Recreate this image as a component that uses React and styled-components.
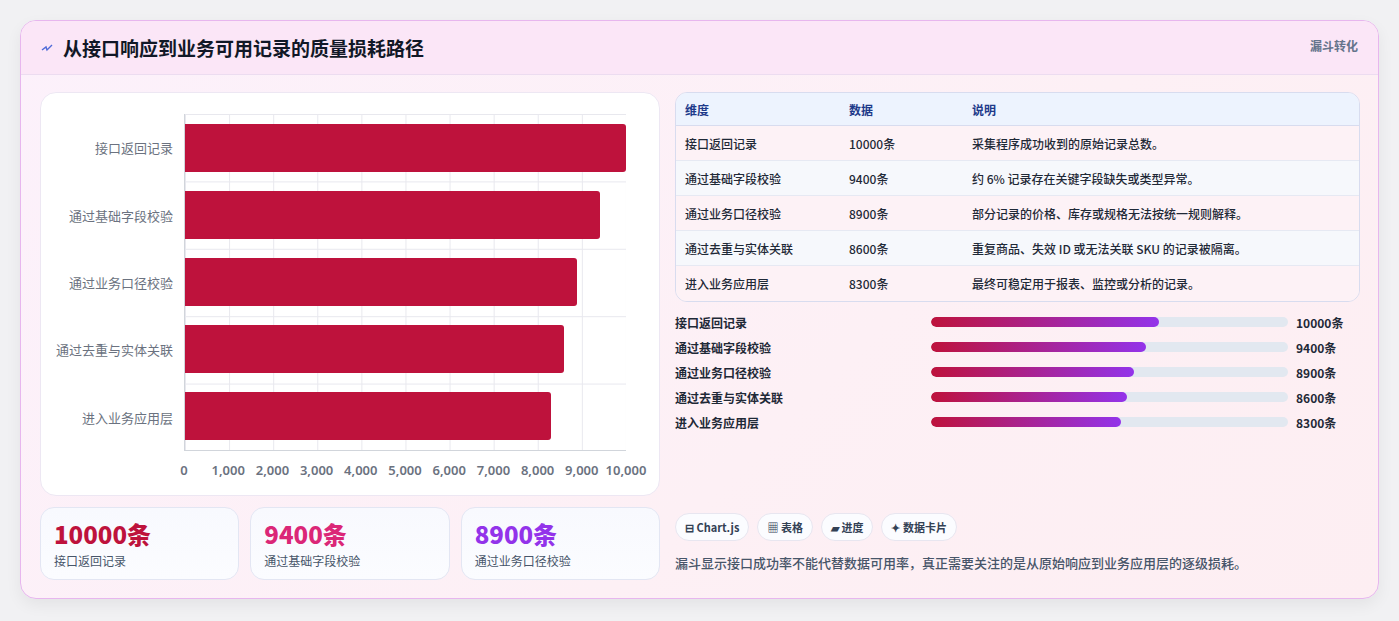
import React from "react";
import styled, { createGlobalStyle } from "styled-components";

const Global = createGlobalStyle`
  body { margin: 0; background: #f1f1f3; font-family: "Noto Sans CJK SC", "Noto Sans", sans-serif; }
  * { box-sizing: border-box; }
`;

const Page = styled.div`
  padding: 20px 20px 22px 20px;
  width: 1399px;
`;
const Card = styled.div`
  width: 1359px;
  height: 579px;
  border: 1px solid #e7b6ee;
  border-radius: 16px;
  background: linear-gradient(135deg, #fcf1fb 0%, #fdf0f5 60%, #fdeef2 100%);
  box-shadow: 0 6px 16px rgba(0,0,0,0.06);
  overflow: hidden;
  display: flex;
  flex-direction: column;
`;
const Header = styled.div`
  height: 55px;
  background: #fbe6f7;
  border-bottom: 1px solid #ecdcf0;
  display: flex;
  align-items: center;
  justify-content: space-between;
  padding: 0 20px 0 20px;
`;
const Title = styled.h1`
  margin: 0;
  font-size: 19px;
  font-weight: 700;
  color: #111827;
  display: flex;
  align-items: center;
  gap: 10px;
`;
const Badge = styled.span`
  font-size: 12px;
  font-weight: 700;
  color: #64748b;
  align-self: flex-start;
  margin-top: 16px;
`;
const Body = styled.div`
  flex: 1;
  display: grid;
  grid-template-columns: 620px 685px;
  gap: 15px;
  padding: 17px 18px 18px 19px;
`;
const Left = styled.div`
  display: flex;
  flex-direction: column;
  gap: 11px;
`;
const ChartBox = styled.div`
  height: 404px;
  background: #fff;
  border: 1px solid #ede7f3;
  border-radius: 16px;
  display: grid;
  grid-template-columns: 143px 442px;
  grid-template-rows: 337px 40px;
  padding-top: 21px;
`;
const YLabels = styled.div`
  display: flex;
  flex-direction: column;
`;
const YLabel = styled.div`
  flex: 1;
  display: flex;
  align-items: center;
  justify-content: flex-end;
  padding-right: 11px;
  font-size: 13px;
  color: #6b7280;
`;
const Plot = styled.div`
  border-left: 1px solid #d1d5db;
  border-bottom: 1px solid #d1d5db;
  background-image:
    linear-gradient(to right, #e8e8ee 1px, transparent 1px),
    linear-gradient(to bottom, #e8e8ee 1px, transparent 1px);
  background-size: 44.1px 100%, 100% 67.4px;
  display: flex;
  flex-direction: column;
`;
const BarRow = styled.div`
  flex: 1;
  display: flex;
  align-items: center;
`;
const Bar = styled.div`
  height: 48px;
  background: #be123c;
  border-radius: 0 3px 3px 0;
`;
const XAxis = styled.div`
  grid-column: 2;
  position: relative;
  font-size: 13px;
  color: #6b7280;
  font-family: "Noto Sans", sans-serif;
  font-weight: 600;
`;
const Tick = styled.span`
  position: absolute;
  top: 10px;
  transform: translateX(-50%);
`;
const Stats = styled.div`
  display: grid;
  grid-template-columns: repeat(3, 1fr);
  gap: 11px;
`;
const Stat = styled.div`
  height: 73px;
  border: 1px solid #e3e6f3;
  border-radius: 14px;
  background: linear-gradient(180deg, #f8f9fe, #fbfcff);
  padding: 10px 13px;
`;
const StatValue = styled.div`
  font-size: 24px;
  font-weight: 800;
  line-height: 32px;
  color: ${p => p.$c};
`;
const StatLabel = styled.div`
  font-size: 12px;
  color: #475569;
  margin-top: 2px;
`;
const Right = styled.div`
  display: flex;
  flex-direction: column;
`;
const Table = styled.table`
  width: 100%;
  border-collapse: separate;
  border-spacing: 0;
  border: 1px solid #d8dcef;
  border-radius: 12px;
  overflow: hidden;
  font-size: 12px;
  color: #1f2937;
  background: #fdf2f6;
`;
const Th = styled.th`
  text-align: left;
  font-weight: 700;
  color: #1e3a8a;
  background: #edf3fe;
  height: 33px;
  padding: 0 9px;
  border-bottom: 1px solid #d8dcef;
  width: ${p => p.$w || "auto"};
`;
const Tr = styled.tr`
  background: ${p => (p.$alt ? "#f6f8fc" : "#fdf2f6")};
`;
const Td = styled.td`
  height: 35px;
  padding: 0 9px;
  border-bottom: ${p => (p.$last ? "none" : "1px solid #e6e9f3")};
  font-weight: 500;
`;
const Progress = styled.div`
  margin-top: 11px;
  display: flex;
  flex-direction: column;
  gap: 7px;
`;
const PRow = styled.div`
  display: grid;
  grid-template-columns: 256px 357px auto;
  align-items: center;
  gap: 0;
  height: 18px;
  font-size: 12px;
  font-weight: 700;
  color: #1f2937;
`;
const Track = styled.div`
  height: 10px;
  border-radius: 5px;
  background: #e2e8f0;
  overflow: hidden;
`;
const Fill = styled.div`
  height: 100%;
  border-radius: 5px;
  background: linear-gradient(90deg, #be123c, #9333ea);
`;
const PVal = styled.span`
  padding-left: 8px;
`;
const Tags = styled.div`
  margin-top: auto;
  display: flex;
  gap: 8px;
`;
const Tag = styled.span`
  height: 28px;
  padding: 0 9px;
  border-radius: 14px;
  border: 1px solid #e8e6f0;
  background: #fbfcff;
  font-size: 11px;
  font-weight: 700;
  color: #334155;
  display: flex;
  align-items: center;
  gap: 4px;
`;
const Note = styled.p`
  margin: 12px 0 8px;
  font-size: 13px;
  font-weight: 500;
  color: #475569;
`;

const rows = [
  ["接口返回记录", 10000, "采集程序成功收到的原始记录总数。"],
  ["通过基础字段校验", 9400, "约 6% 记录存在关键字段缺失或类型异常。"],
  ["通过业务口径校验", 8900, "部分记录的价格、库存或规格无法按统一规则解释。"],
  ["通过去重与实体关联", 8600, "重复商品、失效 ID 或无法关联 SKU 的记录被隔离。"],
  ["进入业务应用层", 8300, "最终可稳定用于报表、监控或分析的记录。"],
];

export default function App() {
  return (
    <Page>
      <Global />
      <Card>
        <Header>
          <Title>
            <svg width="12" height="10" viewBox="0 0 12 10">
              <path d="M1 7 L5 4 L6 7 L11 2" stroke="#4f6bd8" strokeWidth="1.4" fill="none" />
            </svg>
            从接口响应到业务可用记录的质量损耗路径
          </Title>
          <Badge>漏斗转化</Badge>
        </Header>
        <Body>
          <Left>
            <ChartBox>
              <YLabels>
                {rows.map(r => <YLabel key={r[0]}>{r[0]}</YLabel>)}
              </YLabels>
              <Plot>
                {rows.map(r => (
                  <BarRow key={r[0]}>
                    <Bar style={{ width: `${(r[1] / 10000) * 100}%` }} />
                  </BarRow>
                ))}
              </Plot>
              <XAxis>
                {Array.from({ length: 11 }, (_, i) => (
                  <Tick key={i} style={{ left: `${i * 10}%` }}>
                    {(i * 1000).toLocaleString("en-US")}
                  </Tick>
                ))}
              </XAxis>
            </ChartBox>
            <Stats>
              <Stat><StatValue $c="#be123c">10000条</StatValue><StatLabel>接口返回记录</StatLabel></Stat>
              <Stat><StatValue $c="#db2777">9400条</StatValue><StatLabel>通过基础字段校验</StatLabel></Stat>
              <Stat><StatValue $c="#9333ea">8900条</StatValue><StatLabel>通过业务口径校验</StatLabel></Stat>
            </Stats>
          </Left>
          <Right>
            <Table>
              <thead>
                <tr><Th $w="164px">维度</Th><Th $w="123px">数据</Th><Th>说明</Th></tr>
              </thead>
              <tbody>
                {rows.map((r, i) => (
                  <Tr key={r[0]} $alt={i % 2 === 1}>
                    <Td $last={i === 4}>{r[0]}</Td>
                    <Td $last={i === 4}>{r[1]}条</Td>
                    <Td $last={i === 4}>{r[2]}</Td>
                  </Tr>
                ))}
              </tbody>
            </Table>
            <Progress>
              {rows.map(r => (
                <PRow key={r[0]}>
                  <span>{r[0]}</span>
                  <Track><Fill style={{ width: `${(r[1] / 10000) * 64}%` }} /></Track>
                  <PVal>{r[1]}条</PVal>
                </PRow>
              ))}
            </Progress>
            <Tags>
              <Tag>⊟ Chart.js</Tag>
              <Tag>▦ 表格</Tag>
              <Tag>▰ 进度</Tag>
              <Tag>✦ 数据卡片</Tag>
            </Tags>
            <Note>漏斗显示接口成功率不能代替数据可用率，真正需要关注的是从原始响应到业务应用层的逐级损耗。</Note>
          </Right>
        </Body>
      </Card>
    </Page>
  );
}
